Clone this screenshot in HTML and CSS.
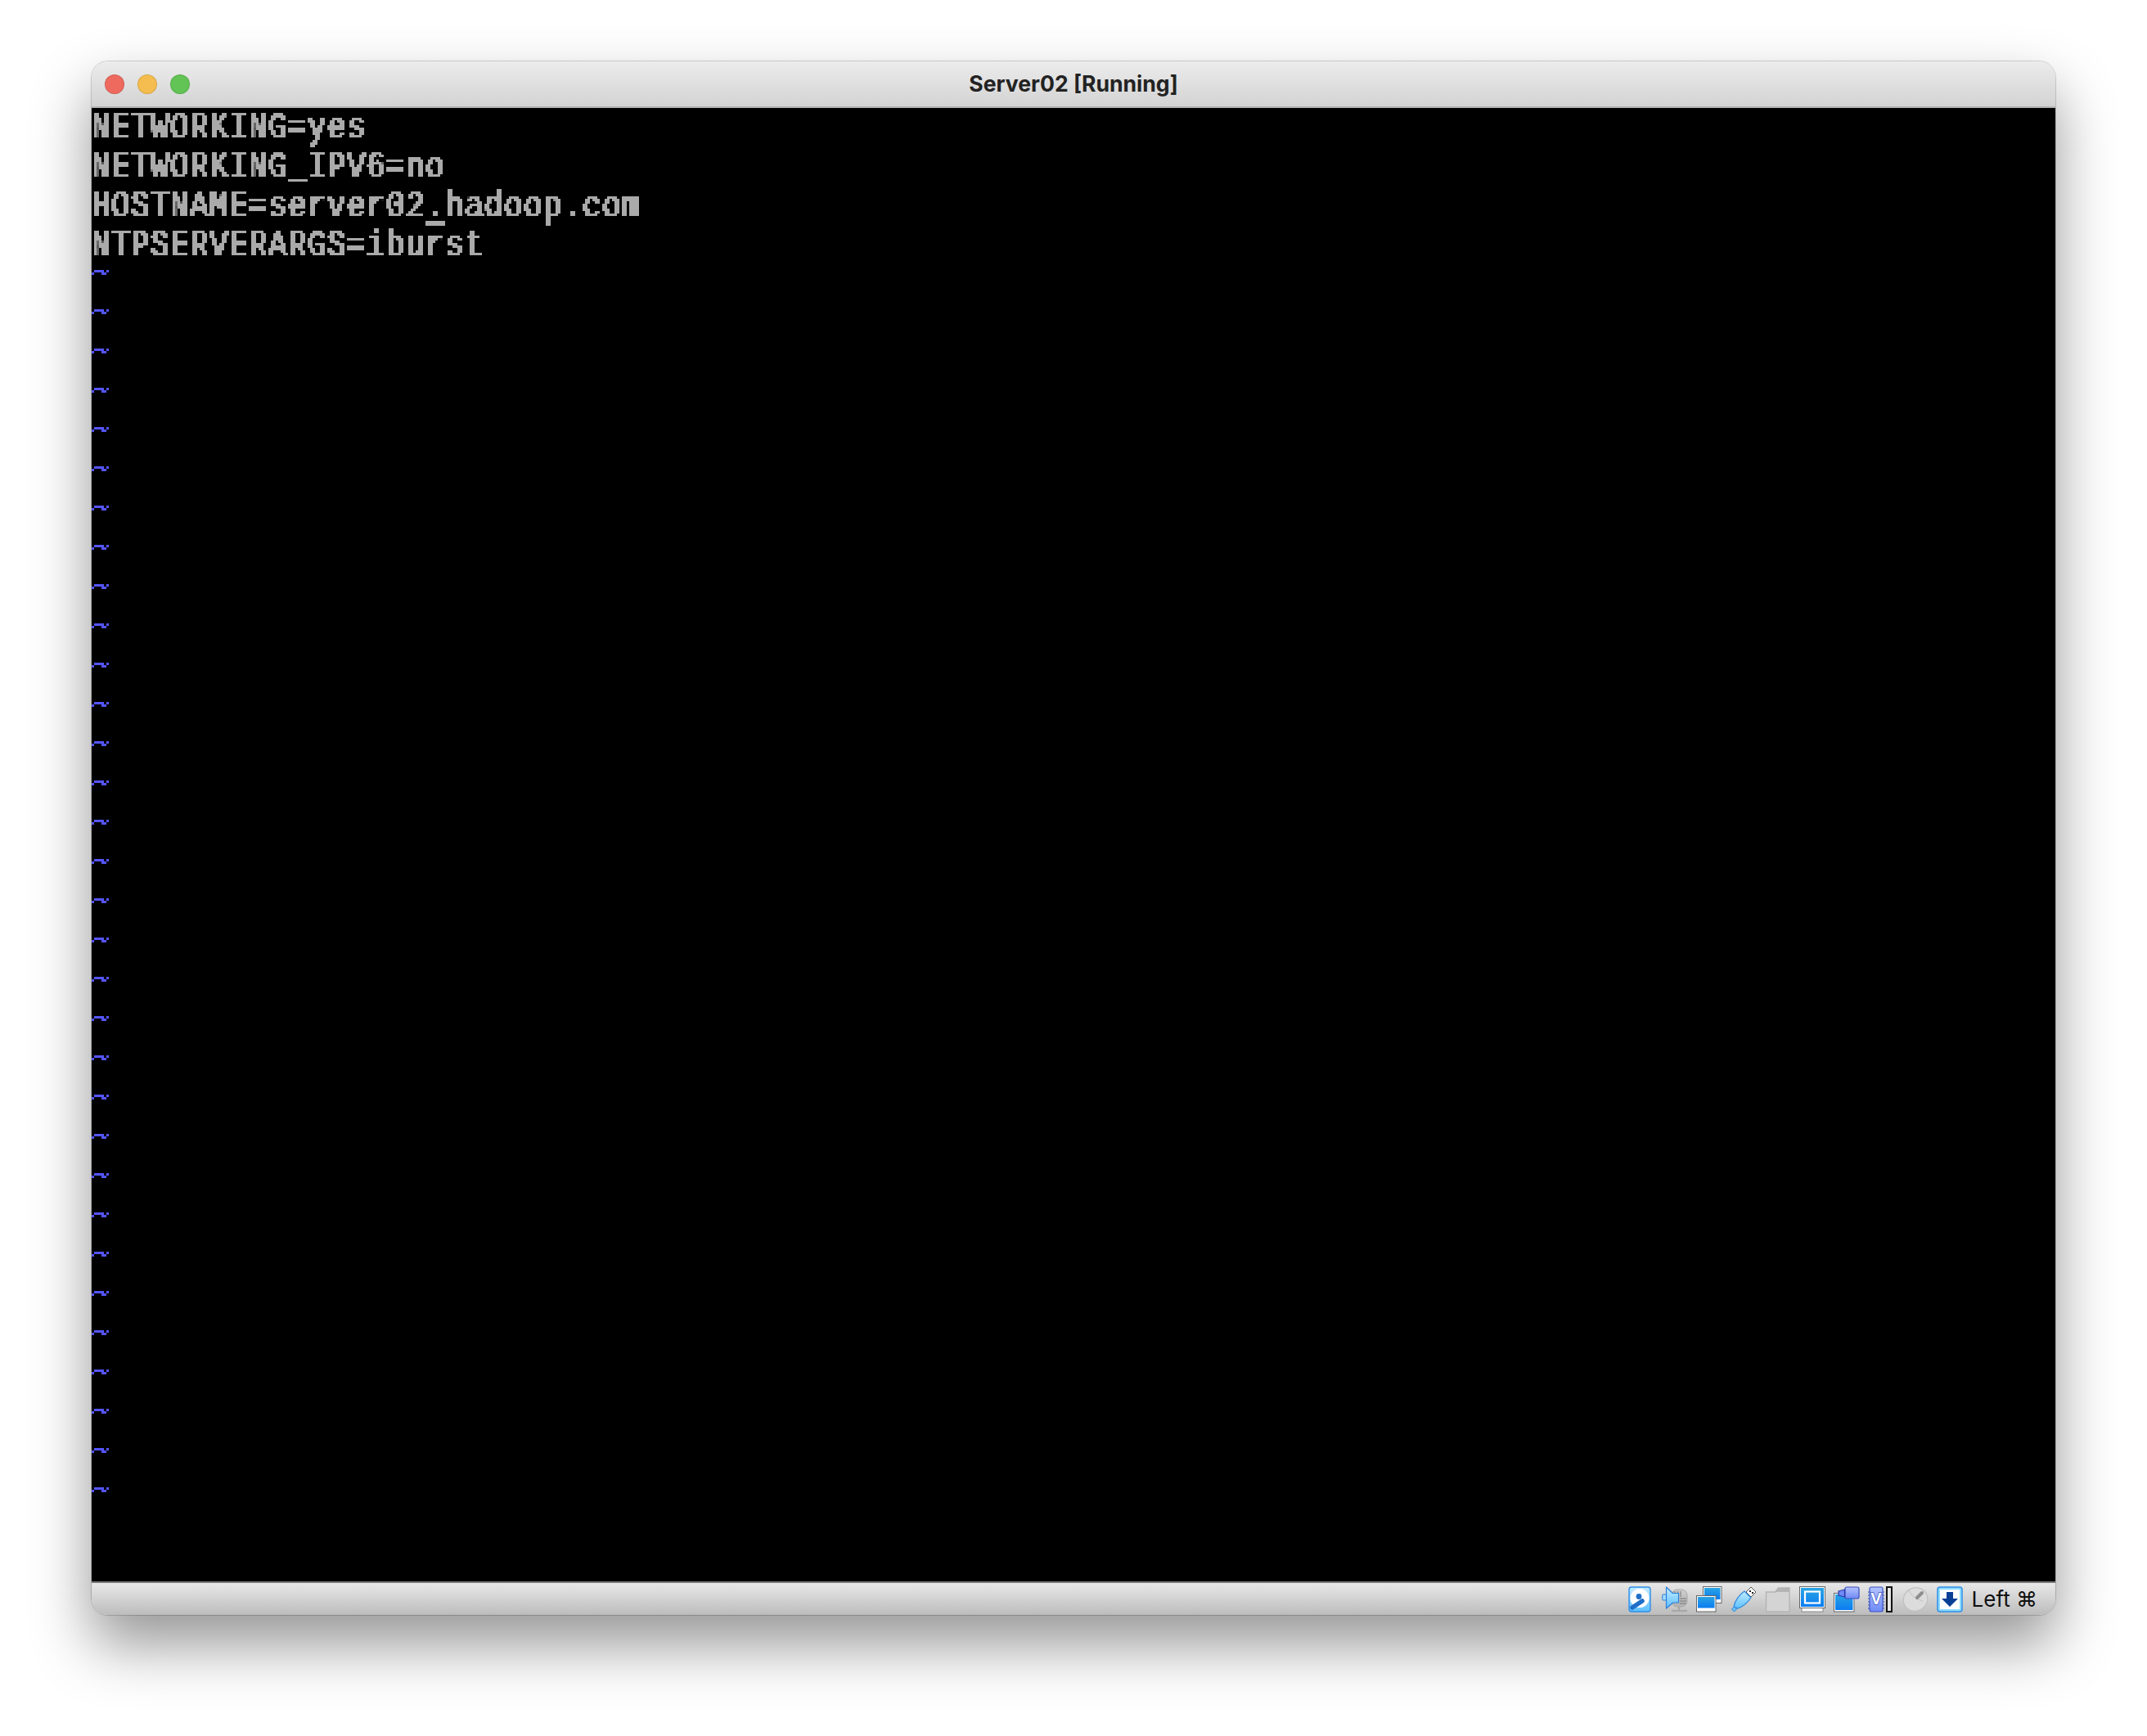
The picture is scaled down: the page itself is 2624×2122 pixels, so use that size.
FILE: index.html
```html
<!DOCTYPE html>
<html lang="en">
<head>
<meta charset="utf-8">
<title>Server02 [Running]</title>
<link rel="stylesheet" href="styles.css">
</head>
<body>
<svg class="defs" width="0" height="0" aria-hidden="true">
  <defs>
    <linearGradient id="g-blue" x1="0" y1="0" x2="0" y2="1"><stop offset="0" stop-color="#2aa4e2"/><stop offset="1" stop-color="#0a7cf2"/></linearGradient>
    <linearGradient id="g-light" x1="0" y1="0" x2="0" y2="1"><stop offset="0" stop-color="#c4ecff"/><stop offset="1" stop-color="#5cc0ff"/></linearGradient>
    <linearGradient id="g-purple" x1="0" y1="0" x2="0" y2="1"><stop offset="0" stop-color="#b4c2ff"/><stop offset="1" stop-color="#6f8af6"/></linearGradient>
    <linearGradient id="g-gray" x1="0" y1="0" x2="0" y2="1"><stop offset="0" stop-color="#cfcfcf"/><stop offset="1" stop-color="#b0b0b0"/></linearGradient>
  </defs>
  <filter id="vga" x="0" y="0" width="100%" height="100%" primitiveUnits="userSpaceOnUse" color-interpolation-filters="sRGB">
    <feMorphology in="SourceGraphic" operator="dilate" radius="1 0" result="thick"/>
    <feFlood x="1" y="1" width="1" height="1" flood-color="#000"/>
    <feComposite x="0" y="0" width="3" height="3" operator="over" in2="SourceAlpha" result="cell"/>
    <feTile in="cell" result="grid"/>
    <feComposite in="thick" in2="grid" operator="in"/>
    <feMorphology operator="dilate" radius="1"/>
    <feComponentTransfer result="mask">
      <feFuncA type="linear" slope="20" intercept="-3"/>
    </feComponentTransfer>
    <feFlood flood-color="#aaaaaa" x="0" y="0" width="100%" height="100%"/>
    <feComposite in2="mask" operator="in"/>
  </filter>
  <filter id="vga-blue" x="0" y="0" width="100%" height="100%" primitiveUnits="userSpaceOnUse" color-interpolation-filters="sRGB">
    <feFlood x="1" y="1" width="1" height="1" flood-color="#000"/>
    <feComposite x="0" y="0" width="3" height="3" operator="over" in2="SourceAlpha" result="cell"/>
    <feTile in="cell" result="grid"/>
    <feComposite in="SourceGraphic" in2="grid" operator="in"/>
    <feMorphology operator="dilate" radius="1"/>
    <feComponentTransfer result="mask">
      <feFuncA type="linear" slope="20" intercept="-3"/>
    </feComponentTransfer>
    <feFlood flood-color="#5555ff" x="0" y="0" width="100%" height="100%"/>
    <feComposite in2="mask" operator="in"/>
  </filter>
</svg>
<main class="window">
  <header class="titlebar">
    <div class="lights">
      <span class="light red"></span>
      <span class="light yellow"></span>
      <span class="light green"></span>
    </div>
    <h1 class="title">Server02 [Running]</h1>
  </header>
  <section class="screen">
    <div class="line"><span class="text">NETWORKING=yes</span></div>
    <div class="line"><span class="text">NETWORKING_IPV6=no</span></div>
    <div class="line"><span class="text">HOSTNAME=server02.hadoop.com</span><span class="cursor"></span></div>
    <div class="line"><span class="text">NTPSERVERARGS=iburst</span></div>
    <div class="line tilde"><span class="text">~</span></div><div class="line tilde"><span class="text">~</span></div><div class="line tilde"><span class="text">~</span></div><div class="line tilde"><span class="text">~</span></div>
    <div class="line tilde"><span class="text">~</span></div><div class="line tilde"><span class="text">~</span></div><div class="line tilde"><span class="text">~</span></div><div class="line tilde"><span class="text">~</span></div>
    <div class="line tilde"><span class="text">~</span></div><div class="line tilde"><span class="text">~</span></div><div class="line tilde"><span class="text">~</span></div><div class="line tilde"><span class="text">~</span></div>
    <div class="line tilde"><span class="text">~</span></div><div class="line tilde"><span class="text">~</span></div><div class="line tilde"><span class="text">~</span></div><div class="line tilde"><span class="text">~</span></div>
    <div class="line tilde"><span class="text">~</span></div><div class="line tilde"><span class="text">~</span></div><div class="line tilde"><span class="text">~</span></div><div class="line tilde"><span class="text">~</span></div>
    <div class="line tilde"><span class="text">~</span></div><div class="line tilde"><span class="text">~</span></div><div class="line tilde"><span class="text">~</span></div><div class="line tilde"><span class="text">~</span></div>
    <div class="line tilde"><span class="text">~</span></div><div class="line tilde"><span class="text">~</span></div><div class="line tilde"><span class="text">~</span></div><div class="line tilde"><span class="text">~</span></div>
    <div class="line tilde"><span class="text">~</span></div><div class="line tilde"><span class="text">~</span></div><div class="line tilde"><span class="text">~</span></div><div class="line tilde"><span class="text">~</span></div>
  </section>
  <footer class="statusbar">
    <svg class="icon" viewBox="0 0 32 32"><rect x="2" y="1" width="26" height="30" rx="3" fill="url(#g-light)" stroke="#2f8fe8" stroke-width="1.400"/><circle cx="15" cy="14.500" r="11.500" fill="#fff"/><circle cx="14" cy="12.500" r="3.400" fill="#1f6fc8"/><path d="M6 26 L18 18" stroke="#1f6fc8" stroke-width="5.500" stroke-linecap="round"/></svg>
    <svg class="icon" viewBox="0 0 32 32"><rect x="12" y="4" width="19" height="21" rx="7" fill="url(#g-gray)" stroke="#a8a8a8"/><path d="M16 6v7M19.500 6v7M23 6v7M22 15h8M22 18h8M22 21h8" stroke="#8f8f8f" stroke-width="1.400"/><path d="M21 25v4M12 30h19" stroke="#a8a8a8" stroke-width="2.400"/><rect x="0.700" y="10" width="5" height="7" rx="1" fill="#a5dcff" stroke="#2a7fd8"/><path d="M5.500 1 L13.500 8.500 H20.500 V20 H13.500 L5.500 27 Z" fill="url(#g-light)" stroke="#2a7fd8" stroke-width="1.200" stroke-linejoin="round"/></svg>
    <svg class="icon" viewBox="0 0 32 32"><rect x="8.500" y="0.500" width="22.500" height="20" fill="#fff" stroke="#666"/><rect x="10" y="2" width="19.500" height="14" fill="url(#g-blue)"/><rect x="0.500" y="11.500" width="23.500" height="19.500" fill="#fff" stroke="#666"/><rect x="2" y="13" width="20.500" height="13.500" fill="url(#g-blue)"/></svg>
    <svg class="icon" viewBox="0 0 32 32"><path d="M19 7 L25 1 L31 7 L25 13 Z" fill="#fff" stroke="#555"/><rect x="23" y="5" width="2" height="2" fill="#222"/><rect x="26" y="7" width="2" height="2" fill="#222"/><path d="M17 6 C11 10 5 18 4 25 L9 27 C15 25 20 21 25 14 Z" fill="url(#g-light)" stroke="#2a86dc" stroke-width="1.200"/><path d="M4.500 25 L7.500 28 L4.500 31 L1.500 28 Z" fill="#6cc3f5" stroke="#2a86dc"/></svg>
    <svg class="icon" viewBox="0 0 32 32"><path d="M1.500 31 V7 H12.500 L16.500 2 H30 V31 Z" fill="#d4d4d4" stroke="#b4b4b4" stroke-width="1.400"/><path d="M12.500 7 L16.500 2 H30 V7 Z" fill="#b4b4b4"/></svg>
    <svg class="icon" viewBox="0 0 32 32"><rect x="3" y="25" width="26" height="6" fill="#fff" stroke="#888"/><rect x="0.500" y="0.500" width="31" height="26" fill="#fff" stroke="#666"/><rect x="2" y="2" width="28" height="23" fill="url(#g-blue)"/><rect x="7" y="6.500" width="18" height="14" fill="none" stroke="#fff" stroke-width="2.200"/></svg>
    <svg class="icon" viewBox="0 0 32 32"><rect x="0.500" y="8.500" width="24.500" height="22.500" fill="#fff" stroke="#666"/><rect x="2" y="10" width="21.500" height="19" fill="url(#g-blue)"/><rect x="14" y="1" width="17" height="14" rx="2" fill="url(#g-purple)" stroke="#3a4fc0" stroke-width="1.200"/><path d="M6 6 L13.500 4 V13 L6 11 Z" fill="#6f8af6" stroke="#2c3aa8" stroke-width="1.200"/></svg>
    <div class="chip">
      <svg class="chip-body" viewBox="0 0 20 32"><rect x="2" y="1" width="16" height="30" rx="2" fill="url(#g-purple)" stroke="#3a55c8" stroke-width="1.200"/><path d="M0 7h2M0 11h2M0 15h2M0 19h2M0 23h2M0 27h2M18 7h2M18 11h2M18 15h2M18 19h2M18 23h2M18 27h2" stroke="#3a55c8"/><text x="10" y="22" class="chip-v">V</text></svg>
      <span class="bar"></span>
    </div>
    <svg class="icon" viewBox="0 0 32 32"><ellipse cx="16" cy="16" rx="15" ry="14" transform="rotate(-30 16 16)" fill="#dcdcdc" stroke="#c2c2c2" stroke-width="1.300"/><path d="M8 5 C11 11 14 15 25 18" fill="none" stroke="#c2c2c2"/><path d="M18 14 L24 8" stroke="#8e8e8e" stroke-width="4" stroke-linecap="round"/></svg>
    <svg class="icon" viewBox="0 0 32 32"><rect x="1" y="1" width="30" height="30" rx="3" fill="#8edcff" stroke="#2f8fe8" stroke-width="1.500"/><rect x="4" y="4" width="24" height="24" fill="#fff"/><path d="M12 7 H20 V15 H26 L16 25 L6 15 H12 Z" fill="#0a3f96"/></svg>
    <span class="hostkey">Left ⌘</span>
  </footer>
</main>
</body>
</html>
```

FILE: styles.css
```css
* {
  box-sizing: border-box;
}

html,
body {
  margin: 0;
  height: 100%;
  overflow: hidden;
  background: #fff;
}

body {
  padding: 75px 112px 0;
}

.defs {
  display: block;
  height: 0;
}

.window {
  width: 2400px;
  height: 1899px;
  display: flex;
  flex-direction: column;
  border-radius: 20px;
  overflow: hidden;
  box-shadow: 0 0 0 1px rgba(0, 0, 0, 0.16), 0 36px 72px rgba(0, 0, 0, 0.42);
}

.titlebar {
  height: 57px;
  flex: none;
  display: flex;
  align-items: center;
  position: relative;
  background: linear-gradient(#ececec, #d3d3d3);
  border-bottom: 2px solid #b4b4b4;
}

.lights {
  display: flex;
  gap: 16px;
  padding-left: 16px;
}

.light {
  width: 24px;
  height: 24px;
  border-radius: 50%;
  border: 1px solid rgba(0, 0, 0, 0.12);
}

.red { background: #ee6a5f; }
.yellow { background: #f5bd4f; }
.green { background: #61c454; }

.title {
  position: absolute;
  left: 0;
  right: 0;
  top: 11px;
  margin: 0;
  text-align: center;
  font: 700 26.600px/32px Inter, "Liberation Sans", sans-serif;
  color: #222;
}

.screen {
  flex: 1;
  background: #000;
}

.line {
  height: 48px;
  padding-top: 8px;
  position: relative;
  color: #aaa;
  filter: url(#vga);
}

.text {
  display: block;
  font: 400 38px/38px "Liberation Mono", monospace;
  letter-spacing: 1.200px;
  white-space: pre;
  transform: scaleY(1.24);
  transform-origin: 0 29px;
}

.tilde {
  padding-top: 0;
  color: #5555ff;
  filter: url(#vga-blue);
}

.tilde .text {
  font: 400 38px/14px "DejaVu Sans Mono", monospace;
  letter-spacing: 0;
  transform: none;
}

.cursor {
  position: absolute;
  left: 408px;
  top: 42px;
  width: 24px;
  height: 6px;
  background: #aaa;
}

.statusbar {
  height: 41px;
  flex: none;
  display: flex;
  align-items: center;
  justify-content: flex-end;
  gap: 10px;
  padding-right: 22px;
  background: linear-gradient(#e8e8e8, #bcbcbc);
  border-top: 2px solid #7c7c7c;
}

.icon {
  width: 32px;
  height: 32px;
  flex: none;
}

.chip {
  width: 32px;
  height: 32px;
  flex: none;
  display: flex;
  gap: 2px;
  align-items: stretch;
}

.chip-body {
  width: 20px;
  height: 32px;
  flex: none;
}

.chip-v {
  font: 700 20px "Liberation Sans", sans-serif;
  fill: #fff;
  stroke: #3a55c8;
  stroke-width: 1.500px;
  paint-order: stroke;
  text-anchor: middle;
}

.bar {
  width: 8px;
  border: 2px solid #111;
  background: #e4e4e4;
}

.hostkey {
  margin-left: 1px;
  font: 400 26px/32px Inter, "DejaVu Sans", sans-serif;
  color: #111;
  white-space: nowrap;
}
```
